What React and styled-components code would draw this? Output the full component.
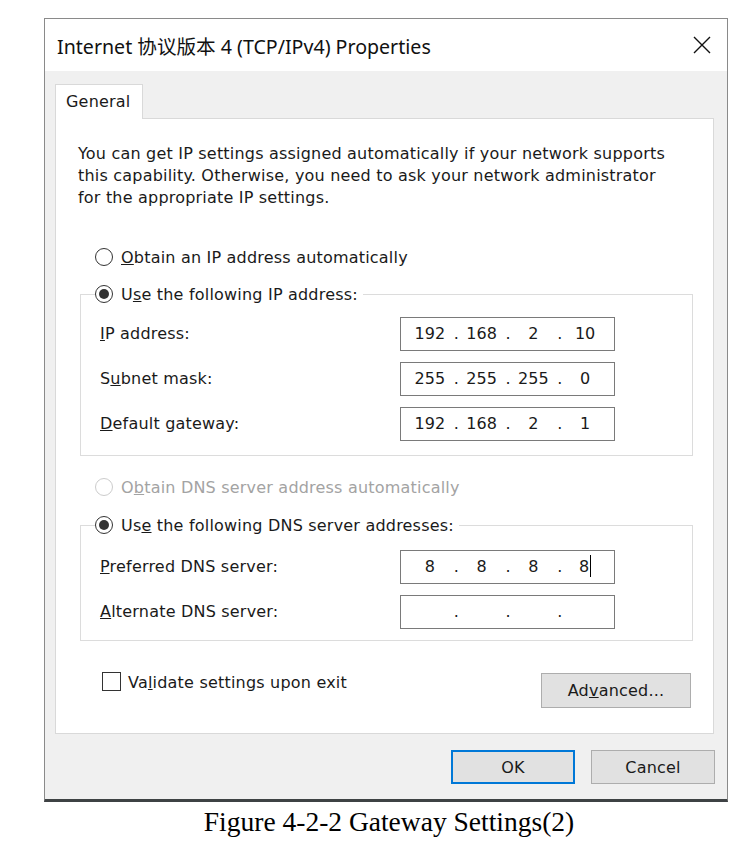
import React from "react";
import styled, { createGlobalStyle } from "styled-components";

const Global = createGlobalStyle`
  html, body { margin: 0; padding: 0; background: #ffffff; }
  * { box-sizing: border-box; }
`;

const UI_FONT = `"DejaVu Sans", "Noto Sans CJK SC", sans-serif`;

const Page = styled.div`
  width: 755px;
  height: 852px;
  display: flex;
  flex-direction: column;
  padding-top: 18px;
  overflow: hidden;
`;

const Window = styled.div`
  margin-left: 44px;
  width: 684px;
  border: 1px solid #8a8a8a;
  border-bottom: 3px solid #3e4244;
  display: flex;
  flex-direction: column;
  font-family: ${UI_FONT};
  font-size: 16px;
  letter-spacing: 0.2px;
  color: #1a1a1a;
`;

const TitleBar = styled.div`
  height: 52px;
  background: #ffffff;
  display: flex;
  align-items: center;
  justify-content: space-between;
  padding: 0 16px 0 12px;
`;

const Title = styled.div`
  font-family: "Noto Sans", "Noto Sans CJK SC", sans-serif;
  font-size: 19.6px;
  letter-spacing: 0;
  color: #111;
`;

const CloseButton = styled.div`
  width: 18px;
  height: 18px;
  display: flex;
  align-items: center;
  justify-content: center;
`;

const Body = styled.div`
  background: #f0f0f0;
  padding: 13px 13px 15px 10px;
  display: flex;
  flex-direction: column;
`;

const TabStrip = styled.div`
  display: flex;
  position: relative;
  z-index: 1;
`;

const Tab = styled.div`
  width: 88px;
  height: 35px;
  background: #ffffff;
  border: 1px solid #d9d9d9;
  border-bottom: none;
  padding: 6px 0 0 10px;
  line-height: 22px;
`;

const Panel = styled.div`
  margin-top: -1px;
  background: #ffffff;
  border: 1px solid #d9d9d9;
  padding: 24px 20px 25px 22px;
  display: flex;
  flex-direction: column;
`;

const Description = styled.p`
  margin: 0;
  line-height: 22px;
`;

const OptionRow = styled.label`
  display: flex;
  align-items: center;
  gap: 8px;
  height: 22px;
  margin-top: ${(p) => p.$mt || 0}px;
  margin-left: ${(p) => p.$ml || 17}px;
  color: ${(p) => (p.$disabled ? "#a3a3a3" : "inherit")};
`;

const Radio = styled.span`
  width: 18px;
  height: 18px;
  border-radius: 50%;
  border: 1px solid ${(p) => (p.$disabled ? "#cccccc" : "#333333")};
  background: #ffffff;
  display: flex;
  align-items: center;
  justify-content: center;
  flex-shrink: 0;
  &::after {
    content: "";
    width: 10px;
    height: 10px;
    border-radius: 50%;
    background: #333333;
    display: ${(p) => (p.$checked ? "block" : "none")};
  }
`;

const Group = styled.fieldset`
  margin: ${(p) => p.$mt}px 0 0 2px;
  border: 1px solid #dcdcdc;
  padding: 0;
  min-width: 0;
`;

const Legend = styled.legend`
  margin-left: 14px;
  padding: 0 5px 0 0;
  display: flex;
  align-items: center;
  gap: 8px;
  height: 22px;
`;

const Fields = styled.div`
  display: grid;
  grid-template-columns: 1fr 215px;
  row-gap: 11px;
  align-items: center;
  padding: ${(p) => p.$pt}px 77px ${(p) => p.$pb}px 19px;
`;

const FieldLabel = styled.span`
  line-height: 22px;
`;

const IpBox = styled.div`
  height: 34px;
  border: 1px solid #7a7a7a;
  background: #ffffff;
  display: flex;
  align-items: center;
  padding: 0 3px;
`;

const Octet = styled.span`
  flex: 1;
  height: 22px;
  text-align: center;
  position: relative;
  line-height: 22px;
  letter-spacing: 0;
  &:not(:last-child)::after {
    content: ".";
    position: absolute;
    right: -3px;
    top: 0;
    line-height: 22px;
  }
`;

const Caret = styled.span`
  display: inline-block;
  width: 1px;
  height: 22px;
  background: #000;
  vertical-align: middle;
  margin-left: 1px;
  margin-top: -3px;
`;

const BottomRow = styled.div`
  display: flex;
  justify-content: space-between;
  align-items: flex-start;
  margin-top: 32px;
`;

const CheckRow = styled.label`
  display: flex;
  align-items: center;
  gap: 7px;
  margin-left: 24px;
  margin-top: 0;
`;

const CheckBox = styled.span`
  width: 19px;
  height: 19px;
  border: 1px solid #333;
  background: #fff;
  margin-top: -2px;
`;

const Button = styled.button`
  font-family: ${UI_FONT};
  font-size: 16px;
  letter-spacing: 0.2px;
  color: #1a1a1a;
  width: ${(p) => p.$w}px;
  height: ${(p) => p.$h || 34}px;
  background: #e1e1e1;
  border: ${(p) => (p.$default ? "2px solid #0078d7" : "1px solid #adadad")};
  padding: 0;
  margin-right: ${(p) => p.$mr || 0}px;
`;

const ButtonRow = styled.div`
  display: flex;
  justify-content: flex-end;
  gap: 16px;
  margin-top: 16px;
  margin-right: -1px;
`;

const Caption = styled.div`
  margin-left: 44px;
  width: 690px;
  text-align: center;
  font-family: "Liberation Serif", "Times New Roman", serif;
  font-size: 27.5px;
  line-height: 30px;
  margin-top: 5px;
  color: #000;
`;

function IpField({ parts, caret }) {
  return (
    <IpBox>
      {parts.map((p, i) => (
        <Octet key={i}>
          {p}
          {caret && i === parts.length - 1 ? <Caret /> : null}
        </Octet>
      ))}
    </IpBox>
  );
}

export default function App() {
  return (
    <>
      <Global />
      <Page>
        <Window>
          <TitleBar>
            <Title>Internet 协议版本 4 (TCP/IPv4) Properties</Title>
            <CloseButton>
              <svg width="18" height="18" viewBox="0 0 18 18">
                <path d="M1 1 L17 17 M17 1 L1 17" stroke="#111" strokeWidth="1.4" />
              </svg>
            </CloseButton>
          </TitleBar>
          <Body>
            <TabStrip>
              <Tab>General</Tab>
            </TabStrip>
            <Panel>
              <Description>
                You can get IP settings assigned automatically if your network supports
                <br />
                this capability. Otherwise, you need to ask your network administrator
                <br />
                for the appropriate IP settings.
              </Description>

              <OptionRow $mt={37}>
                <Radio />
                <span>
                  <u>O</u>btain an IP address automatically
                </span>
              </OptionRow>

              <Group $mt={15}>
                <Legend>
                  <Radio $checked />
                  <span>
                    U<u>s</u>e the following IP address:
                  </span>
                </Legend>
                <Fields $pt={12} $pb={14}>
                  <FieldLabel>
                    <u>I</u>P address:
                  </FieldLabel>
                  <IpField parts={["192", "168", "2", "10"]} />
                  <FieldLabel>
                    S<u>u</u>bnet mask:
                  </FieldLabel>
                  <IpField parts={["255", "255", "255", "0"]} />
                  <FieldLabel>
                    <u>D</u>efault gateway:
                  </FieldLabel>
                  <IpField parts={["192", "168", "2", "1"]} />
                </Fields>
              </Group>

              <OptionRow $mt={20} $disabled>
                <Radio $disabled />
                <span>
                  O<u>b</u>tain DNS server address automatically
                </span>
              </OptionRow>

              <Group $mt={16}>
                <Legend>
                  <Radio $checked />
                  <span>
                    Us<u>e</u> the following DNS server addresses:
                  </span>
                </Legend>
                <Fields $pt={14} $pb={11}>
                  <FieldLabel>
                    <u>P</u>referred DNS server:
                  </FieldLabel>
                  <IpField parts={["8", "8", "8", "8"]} caret />
                  <FieldLabel>
                    <u>A</u>lternate DNS server:
                  </FieldLabel>
                  <IpField parts={["", "", "", ""]} />
                </Fields>
              </Group>

              <BottomRow>
                <CheckRow>
                  <CheckBox />
                  <span>
                    Va<u>l</u>idate settings upon exit
                  </span>
                </CheckRow>
                <Button $w={150} $h={35} $mr={2}>
                  Ad<u>v</u>anced...
                </Button>
              </BottomRow>
            </Panel>
            <ButtonRow>
              <Button $w={124} $default>
                OK
              </Button>
              <Button $w={124}>Cancel</Button>
            </ButtonRow>
          </Body>
        </Window>
        <Caption>Figure 4-2-2 Gateway Settings(2)</Caption>
      </Page>
    </>
  );
}
